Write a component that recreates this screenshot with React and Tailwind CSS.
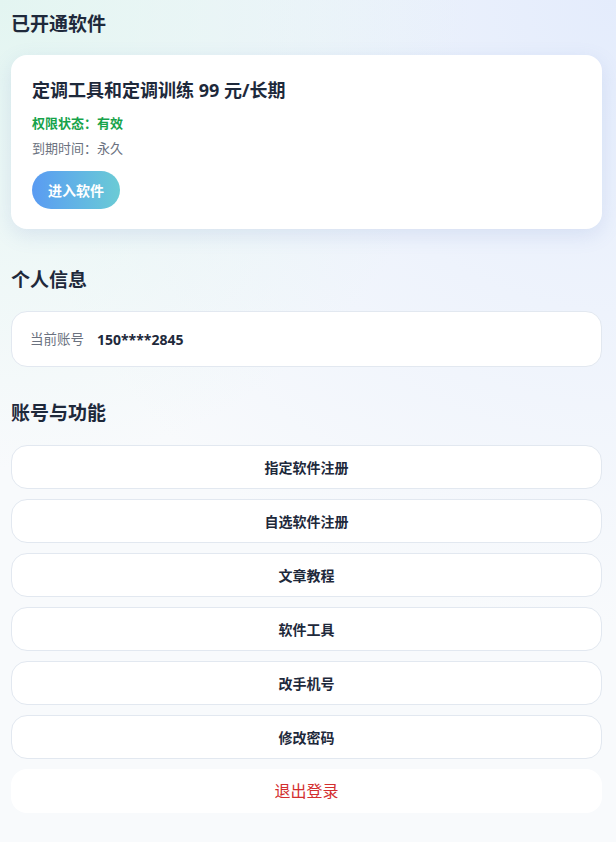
const menuItems = ['指定软件注册', '自选软件注册', '文章教程', '软件工具', '改手机号', '修改密码'];

export default function App() {
  return (
    <div
      className="min-h-screen bg-[#f8fafc] bg-[radial-gradient(circle_at_0%_0%,#e3f5f1_0%,transparent_45%),radial-gradient(circle_at_100%_0%,#e4ecfc_0%,transparent_60%)] pl-[11px] pr-[14px] pt-[10px] pb-[30px] text-[#1e293b]"
      style={{ fontFamily: '"Noto Sans", "Noto Sans CJK SC", sans-serif' }}
    >
      {/* 已开通软件 */}
      <h2 className="text-[19px] font-bold leading-[28px]">已开通软件</h2>
      <div className="mt-[17px] rounded-[16px] bg-white px-[21px] pt-[21px] pb-[20px] shadow-[0_6px_20px_rgba(100,130,200,0.16)]">
        <h3 className="text-[18px] font-bold leading-[28px]">定调工具和定调训练 99 元/长期</h3>
        <p className="mt-[9px] text-[13px] font-bold leading-[20px] text-[#16a34a]">权限状态：有效</p>
        <p className="mt-[5px] text-[13px] leading-[20px] text-[#6b7280]">到期时间：永久</p>
        <button className="mt-[13px] h-[38px] rounded-full bg-gradient-to-r from-[#5a9bf2] to-[#6bcbd5] px-[16px] text-[14px] font-bold text-white">
          进入软件
        </button>
      </div>

      {/* 个人信息 */}
      <h2 className="mt-[37px] text-[19px] font-bold leading-[28px]">个人信息</h2>
      <div className="mt-[17px] flex h-[56px] items-center gap-[13px] rounded-[16px] border border-[#e2e8f0] bg-white px-[18px]">
        <span className="text-[13.5px] text-[#6b7280]">当前账号</span>
        <span className="text-[14px] font-bold">150****2845</span>
      </div>

      {/* 账号与功能 */}
      <h2 className="mt-[32px] text-[19px] font-bold leading-[28px]">账号与功能</h2>
      <div className="mt-[18px] flex flex-col gap-[10px]">
        {menuItems.map((item) => (
          <button
            key={item}
            className="h-[44px] rounded-[16px] border border-[#e2e8f0] bg-white text-[14px] font-bold"
          >
            {item}
          </button>
        ))}
        <button className="h-[44px] rounded-[16px] bg-white text-[16px] text-[#d32f2f]">
          退出登录
        </button>
      </div>
    </div>
  );
}
